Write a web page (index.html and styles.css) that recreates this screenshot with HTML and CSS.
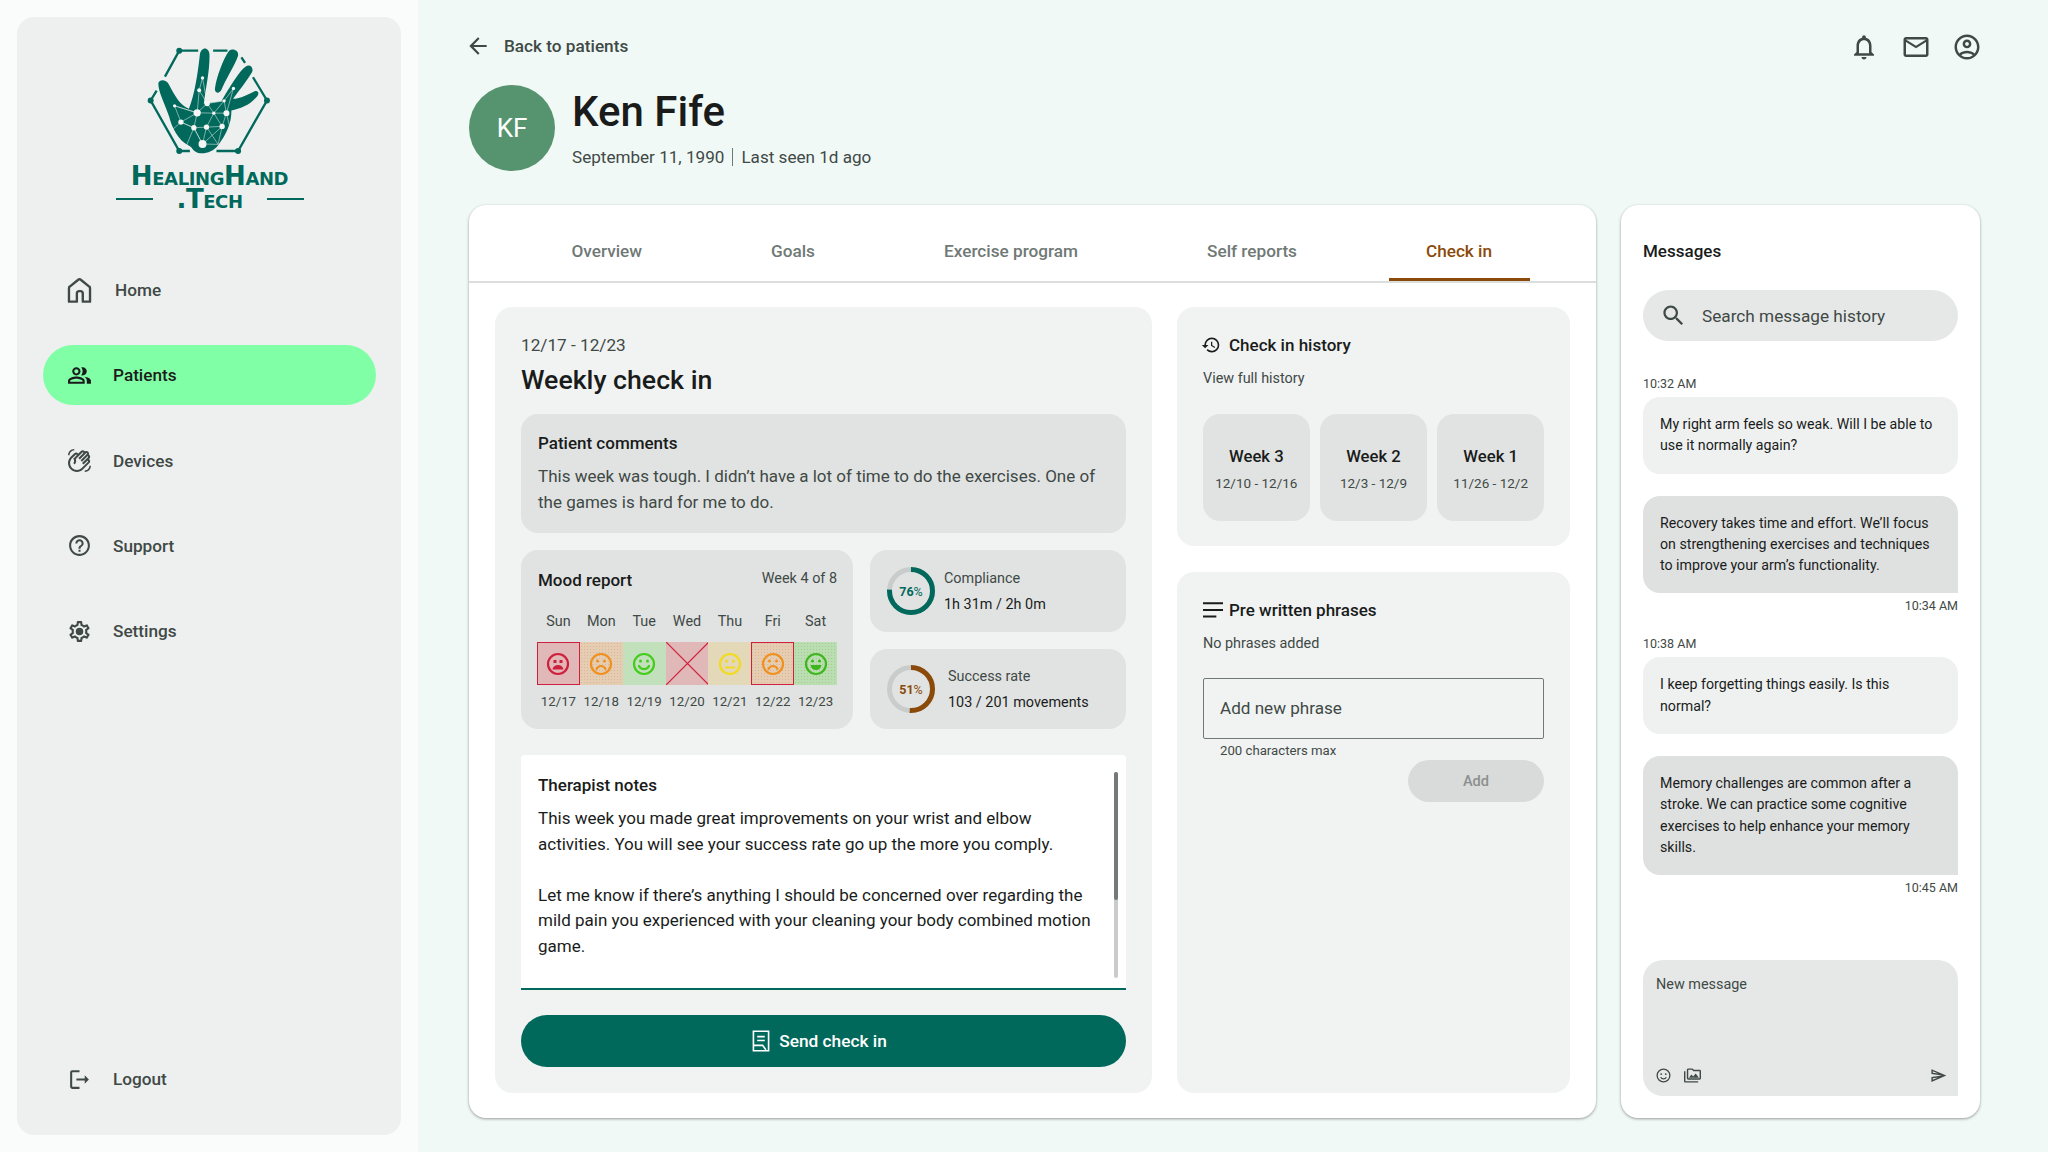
FILE: index.html
```html
<!DOCTYPE html>
<html lang="en">
<head>
<meta charset="utf-8">
<title>Ken Fife - Check in</title>
<link rel="stylesheet" href="styles.css">
</head>
<body>
<div class="app">
  <div class="side-wrap">
    <aside class="sidebar">
      <div class="logo">
        <svg class="logo-mark" viewBox="150 40 400 340" aria-hidden="true">
          <g class="hex">
            <path d="M225 138 268 60H325M370 60H413M455 80 466 97M490 140 532 210 445 362H380M300 362H268L182 210 200 180"/>
            <circle cx="268" cy="60" r="9"/><circle cx="182" cy="210" r="9"/><circle cx="532" cy="210" r="9"/><circle cx="445" cy="362" r="9"/><circle cx="268" cy="362" r="9"/>
          </g>
          <g class="hand">
            <path d="M205 158C208 145 228 146 236 160 255 195 268 222 297 235 315 190 325 120 330 72 333 47 358 47 359 72 360 120 348 170 342 220L395 212C420 170 450 120 468 108 482 98 495 115 485 128 465 160 440 190 430 205 450 205 480 190 495 182 507 178 510 190 500 200 480 225 450 235 425 240 425 280 410 310 385 345 370 365 345 372 325 368 305 360 310 352 295 345 265 330 245 290 238 260 225 220 205 185 205 158Z"/>
            <path d="M418 60C428 52 448 58 445 75 435 105 405 150 395 178 388 192 372 188 376 170 380 140 400 85 418 60Z"/>
          </g>
          <g class="net">
            <path d="M338 142 328 179 322 247M338 142 352 219 403 211 431 174 410 248 403 211M328 179 352 219 322 247 254 226 273 275 322 247 312 292 273 275 245 300M254 226 322 247M352 219 372 248 322 247M372 248 410 248 397 288 350 290 372 248 397 288M403 211 372 248M312 292 350 290 338 341 312 292 290 345M273 275 312 292 338 341 385 342 397 288 338 341M350 290 385 342M410 248 420 290"/>
            <circle cx="338" cy="142" r="5"/><circle cx="328" cy="179" r="6"/><circle cx="352" cy="219" r="8"/><circle cx="403" cy="211" r="5"/><circle cx="431" cy="174" r="5"/><circle cx="254" cy="226" r="5"/><circle cx="322" cy="247" r="11"/><circle cx="372" cy="248" r="5"/><circle cx="410" cy="248" r="9"/><circle cx="273" cy="275" r="8"/><circle cx="312" cy="292" r="8"/><circle cx="350" cy="290" r="8"/><circle cx="397" cy="288" r="8"/><circle cx="338" cy="341" r="12"/>
          </g>
        </svg>
        <div class="logo-name">HealingHand</div>
        <div class="logo-tld"><span class="logo-rule"></span><span class="logo-tech">.Tech</span><span class="logo-rule"></span></div>
      </div>
      <nav class="nav">
        <a class="nav-item">
          <svg class="icon icon-nav" viewBox="2.500 2.500 19 19"><path class="line" d="M4 20.500V10.200c0-.5.2-.9.6-1.200l6.200-5c.7-.6 1.700-.6 2.400 0l6.200 5c.4.3.6.7.6 1.200v10.300h-5.500v-6.200c0-1-.8-1.800-1.800-1.800h-.9c-1 0-1.800.8-1.800 1.800v6.200z"/></svg>
          <span class="nav-label nav-label-home">Home</span>
        </a>
        <a class="nav-item is-active">
          <svg class="icon icon-nav" viewBox="0 0 24 24"><path d="M16.67 13.13C18.04 14.06 19 15.32 19 17v3h4v-3c0-2.18-3.57-3.47-6.33-3.87zM15 12c2.21 0 4-1.79 4-4s-1.79-4-4-4c-.47 0-.91.1-1.33.24C14.5 5.27 15 6.58 15 8s-.5 2.73-1.33 3.76c.42.14.86.24 1.33.24zM9 12c2.21 0 4-1.79 4-4s-1.79-4-4-4-4 1.79-4 4 1.79 4 4 4zm0-6c1.1 0 2 .9 2 2s-.9 2-2 2-2-.9-2-2 .9-2 2-2zM9 13c-2.67 0-8 1.34-8 4v3h16v-3c0-2.66-5.33-4-8-4zm6 5H3v-.99C3.2 16.29 6.3 15 9 15s5.8 1.29 6 2z"/></svg>
          <span class="nav-label">Patients</span>
        </a>
        <a class="nav-item">
          <svg class="icon icon-nav" viewBox="0 0 24 24"><path d="M7.03 4.95 3.49 8.49c-3.32 3.32-3.32 8.7 0 12.02s8.7 3.32 12.02 0l6.01-6.01c.97-.97.97-2.56 0-3.54-.12-.12-.25-.23-.39-.32l.39-.39c.97-.97.97-2.56 0-3.54-.16-.16-.35-.3-.54-.41.38-.92.21-2.02-.54-2.77-.87-.87-2.22-.96-3.2-.28-.1-.15-.21-.29-.34-.42-.98-.97-2.56-.97-3.54 0l-2.51 2.51c-.12-.14-.24-.27-.36-.4-.98-.97-2.56-.97-3.54 0zm1.41 1.42c.2-.2.51-.2.71 0s.2.51 0 .71l-3.18 3.18c1.17 1.17 1.17 3.07 0 4.24l1.41 1.41c1.45-1.45 1.82-3.57 1.12-5.36l6.3-6.3c.2-.2.51-.2.71 0s.2.51 0 .71l-4.6 4.6 1.41 1.41 6.01-6.01c.2-.2.51-.2.71 0s.2.51 0 .71l-6.01 6.01 1.41 1.41 4.95-4.95c.2-.2.51-.2.71 0s.2.51 0 .71l-5.66 5.66 1.41 1.41 3.54-3.54c.2-.2.51-.2.71 0s.2.51 0 .71l-6 6.01c-2.54 2.54-6.65 2.54-9.19 0s-2.54-6.65 0-9.19l3.54-3.53zM23 17c0 3.31-2.69 6-6 6v-1.5c2.48 0 4.5-2.02 4.5-4.5H23zM1 7c0-3.31 2.69-6 6-6v1.5C4.52 2.5 2.5 4.52 2.5 7H1z"/></svg>
          <span class="nav-label">Devices</span>
        </a>
        <a class="nav-item">
          <svg class="icon icon-nav" viewBox="0 0 24 24"><path d="M11 18h2v-2h-2v2zm1-16C6.48 2 2 6.48 2 12s4.48 10 10 10 10-4.48 10-10S17.52 2 12 2zm0 18c-4.41 0-8-3.59-8-8s3.59-8 8-8 8 3.59 8 8-3.59 8-8 8zm0-14c-2.21 0-4 1.79-4 4h2c0-1.1.9-2 2-2s2 .9 2 2c0 2-3 1.75-3 5h2c0-2.25 3-2.5 3-5 0-2.21-1.79-4-4-4z"/></svg>
          <span class="nav-label">Support</span>
        </a>
        <a class="nav-item">
          <svg class="icon icon-nav" viewBox="0 0 24 24"><path d="M19.43 12.98c.04-.32.07-.64.07-.98 0-.34-.03-.66-.07-.98l2.11-1.65c.19-.15.24-.42.12-.64l-2-3.46c-.09-.16-.26-.25-.44-.25-.06 0-.12.01-.17.03l-2.49 1c-.52-.4-1.08-.73-1.69-.98l-.38-2.65C14.46 2.18 14.25 2 14 2h-4c-.25 0-.46.18-.49.42l-.38 2.65c-.61.25-1.17.59-1.69.98l-2.49-1c-.06-.02-.12-.03-.18-.03-.17 0-.34.09-.43.25l-2 3.46c-.13.22-.07.49.12.64l2.11 1.65c-.04.32-.07.65-.07.98 0 .33.03.66.07.98l-2.11 1.65c-.19.15-.24.42-.12.64l2 3.46c.09.16.26.25.44.25.06 0 .12-.01.17-.03l2.49-1c.52.4 1.08.73 1.69.98l.38 2.65c.03.24.24.42.49.42h4c.25 0 .46-.18.49-.42l.38-2.65c.61-.25 1.17-.59 1.69-.98l2.49 1c.06.02.12.03.18.03.17 0 .34-.09.43-.25l2-3.46c.12-.22.07-.49-.12-.64l-2.11-1.65zm-1.98-1.71c.04.31.05.52.05.73 0 .21-.02.43-.05.73l-.14 1.13.89.7 1.08.84-.7 1.21-1.27-.51-1.04-.42-.9.68c-.43.32-.84.56-1.25.73l-1.06.43-.16 1.13-.2 1.35h-1.4l-.19-1.35-.16-1.13-1.06-.43c-.43-.18-.83-.41-1.23-.71l-.91-.7-1.06.43-1.27.51-.7-1.21 1.08-.84.89-.7-.14-1.13c-.03-.31-.05-.54-.05-.74s.02-.43.05-.73l.14-1.13-.89-.7-1.08-.84.7-1.21 1.27.51 1.04.42.9-.68c.43-.32.84-.56 1.25-.73l1.06-.43.16-1.13.2-1.35h1.39l.19 1.35.16 1.13 1.06.43c.43.18.83.41 1.23.71l.91.7 1.06-.43 1.27-.51.7 1.21-1.07.85-.89.7.14 1.13z"/><circle cx="12" cy="12" r="3.600"/></svg>
          <span class="nav-label">Settings</span>
        </a>
      </nav>
      <a class="nav-item nav-logout">
        <svg class="icon icon-nav" viewBox="0 0 24 24"><path d="M5 5h7V3H5a2 2 0 0 0-2 2v14a2 2 0 0 0 2 2h7v-2H5V5zm16 7-4-4v3H9v2h8v3l4-4z"/></svg>
        <span class="nav-label">Logout</span>
      </a>
    </aside>
  </div>

  <main class="main">
    <div class="topbar">
      <a class="back">
        <svg class="icon icon-back" viewBox="0 0 24 24"><path d="M20 11H7.830l5.590-5.590L12 4l-8 8 8 8 1.410-1.410L7.830 13H20v-2z"/></svg>
        <span>Back to patients</span>
      </a>
      <div class="top-icons">
        <svg class="icon icon-top" viewBox="0 0 24 24"><path d="M12 22c1.100 0 2-.9 2-2h-4c0 1.100.9 2 2 2zm6-6v-5c0-3.070-1.630-5.640-4.500-6.320V4c0-.83-.67-1.500-1.500-1.500s-1.500.67-1.500 1.500v.68C7.640 5.360 6 7.920 6 11v5l-2 2v1h16v-1l-2-2zm-2 1H8v-6c0-2.480 1.510-4.500 4-4.500s4 2.020 4 4.500v6z"/></svg>
        <svg class="icon icon-top" viewBox="0 0 24 24"><path d="M22 6c0-1.100-.9-2-2-2H4c-1.100 0-2 .9-2 2v12c0 1.100.9 2 2 2h16c1.100 0 2-.9 2-2V6zm-2 0-8 5-8-5h16zm0 12H4V8l8 5 8-5v10z"/></svg>
        <svg class="icon icon-top" viewBox="0 0 24 24"><path d="M12 2C6.480 2 2 6.480 2 12s4.480 10 10 10 10-4.480 10-10S17.520 2 12 2zM7.350 18.500C8.660 17.560 10.260 17 12 17s3.340.56 4.650 1.500c-1.310.94-2.910 1.500-4.650 1.500s-3.340-.56-4.650-1.500zm10.790-1.380C16.450 15.800 14.320 15 12 15s-4.450.8-6.140 2.120C4.700 15.730 4 13.950 4 12c0-4.420 3.580-8 8-8s8 3.580 8 8c0 1.950-.7 3.730-1.860 5.120zM12 6c-1.930 0-3.500 1.570-3.500 3.500S10.070 13 12 13s3.500-1.570 3.500-3.500S13.930 6 12 6zm0 5c-.83 0-1.500-.67-1.500-1.500S11.170 8 12 8s1.500.67 1.500 1.500S12.830 11 12 11z"/></svg>
      </div>
    </div>

    <header class="patient">
      <div class="avatar">KF</div>
      <div class="patient-info">
        <h1 class="patient-name">Ken Fife</h1>
        <p class="patient-meta"><span>September 11, 1990</span><span class="meta-sep"></span><span>Last seen 1d ago</span></p>
      </div>
    </header>

    <div class="content">
      <section class="card card-main">
        <div class="tabs">
          <a class="tab">Overview</a>
          <a class="tab">Goals</a>
          <a class="tab">Exercise program</a>
          <a class="tab">Self reports</a>
          <a class="tab is-active">Check in</a>
        </div>
        <div class="panels">
          <div class="panel panel-checkin">
            <div class="week-range">12/17 - 12/23</div>
            <h2 class="checkin-title">Weekly check in</h2>
            <div class="comments">
              <h3 class="block-title">Patient comments</h3>
              <p class="block-text">This week was tough. I didn’t have a lot of time to do the exercises. One of the games is hard for me to do.</p>
            </div>
            <div class="stats-row">
              <div class="mood">
                <div class="mood-head">
                  <h3 class="block-title">Mood report</h3>
                  <span class="mood-week">Week 4 of 8</span>
                </div>
                <div class="mood-grid">
                  <span class="mood-day">Sun</span><span class="mood-day">Mon</span><span class="mood-day">Tue</span><span class="mood-day">Wed</span><span class="mood-day">Thu</span><span class="mood-day">Fri</span><span class="mood-day">Sat</span>
                  <div class="mood-cell bg-red is-flagged">
                    <svg class="face face-red" viewBox="0 0 24 24"><circle cx="12" cy="12" r="10"/><path class="fill" d="M7.500 8h3v3h-3zM13.500 8h3v3h-3zM6.500 17.500c.5-3 2.500-4.500 5.500-4.500s5 1.500 5.500 4.500z"/></svg>
                  </div>
                  <div class="mood-cell bg-orange dots">
                    <svg class="face face-orange" viewBox="0 0 24 24"><circle cx="12" cy="12" r="10"/><circle class="fill" cx="8.500" cy="9" r="1.500"/><circle class="fill" cx="15.500" cy="9" r="1.500"/><path d="M7.500 17c1-2 2.500-3 4.500-3s3.500 1 4.500 3"/></svg>
                  </div>
                  <div class="mood-cell bg-green">
                    <svg class="face face-green" viewBox="0 0 24 24"><circle cx="12" cy="12" r="10"/><circle class="fill" cx="8.500" cy="9" r="1.500"/><circle class="fill" cx="15.500" cy="9" r="1.500"/><path d="M7 14c1 2 2.800 3.200 5 3.200s4-1.200 5-3.200"/></svg>
                  </div>
                  <div class="mood-cell bg-red">
                    <svg class="cross" viewBox="0 0 42 42" preserveAspectRatio="none"><path d="M0 0 42 42M42 0 0 42"/></svg>
                  </div>
                  <div class="mood-cell bg-yellow">
                    <svg class="face face-yellow" viewBox="0 0 24 24"><circle cx="12" cy="12" r="10"/><circle class="fill" cx="8.500" cy="9" r="1.500"/><circle class="fill" cx="15.500" cy="9" r="1.500"/><path d="M8 15.500h8"/></svg>
                  </div>
                  <div class="mood-cell bg-orange dots is-flagged">
                    <svg class="face face-orange" viewBox="0 0 24 24"><circle cx="12" cy="12" r="10"/><circle class="fill" cx="8.500" cy="9" r="1.500"/><circle class="fill" cx="15.500" cy="9" r="1.500"/><path d="M7.500 17c1-2 2.500-3 4.500-3s3.500 1 4.500 3"/></svg>
                  </div>
                  <div class="mood-cell bg-lime dots">
                    <svg class="face face-lime" viewBox="0 0 24 24"><circle cx="12" cy="12" r="10"/><circle class="fill" cx="8.500" cy="9" r="1.500"/><circle class="fill" cx="15.500" cy="9" r="1.500"/><path class="fill" d="M6.500 13h11c-.3 3-2.500 5-5.500 5s-5.200-2-5.500-5z"/></svg>
                  </div>
                  <span class="mood-date">12/17</span><span class="mood-date">12/18</span><span class="mood-date">12/19</span><span class="mood-date">12/20</span><span class="mood-date">12/21</span><span class="mood-date">12/22</span><span class="mood-date">12/23</span>
                </div>
              </div>
              <div class="stat-col">
                <div class="stat stat-compliance">
                  <div class="ring ring-teal">
                    <svg viewBox="0 0 48 48"><circle class="ring-track" cx="24" cy="24" r="21.500"/><circle class="ring-bar" cx="24" cy="24" r="21.500" pathLength="100" stroke-dasharray="76 24"/></svg>
                    <span class="ring-value">76<i>%</i></span>
                  </div>
                  <div class="stat-text">
                    <span class="stat-label">Compliance</span>
                    <span class="stat-value">1h 31m / 2h 0m</span>
                  </div>
                </div>
                <div class="stat stat-success">
                  <div class="ring ring-brown">
                    <svg viewBox="0 0 48 48"><circle class="ring-track" cx="24" cy="24" r="21.500"/><circle class="ring-bar" cx="24" cy="24" r="21.500" pathLength="100" stroke-dasharray="51 49"/></svg>
                    <span class="ring-value">51<i>%</i></span>
                  </div>
                  <div class="stat-text">
                    <span class="stat-label">Success rate</span>
                    <span class="stat-value">103 / 201 movements</span>
                  </div>
                </div>
              </div>
            </div>
            <div class="notes">
              <h3 class="block-title">Therapist notes</h3>
              <p class="notes-text">This week you made great improvements on your wrist and elbow activities. You will see your success rate go up the more you comply.</p>
              <p class="notes-text">Let me know if there’s anything I should be concerned over regarding the mild pain you experienced with your cleaning your body combined motion game.</p>
              <div class="scroll-track"><div class="scroll-thumb"></div></div>
            </div>
            <button class="send-btn" type="button">
              <svg class="icon-doc" viewBox="0 0 24 24"><path d="M5 3h14v18H5zM8.500 8h7M8.500 11.500h7M5 16h8.500l3 4"/></svg>
              <span>Send check in</span>
            </button>
          </div>

          <div class="panel-stack">
            <div class="panel panel-history">
              <h3 class="side-title">
                <svg class="icon icon-title icon-history" viewBox="0 0 24 24"><path d="M13 3a9 9 0 0 0-9 9H1l3.890 3.890.070.140L9 12H6c0-3.870 3.130-7 7-7s7 3.130 7 7-3.130 7-7 7c-1.930 0-3.680-.790-4.940-2.060l-1.420 1.420A8.954 8.954 0 0 0 13 21a9 9 0 0 0 0-18zm-1 5v5l4.280 2.540.720-1.210-3.500-2.080V8H12z"/></svg>
                <span>Check in history</span>
              </h3>
              <a class="side-sub">View full history</a>
              <div class="weeks">
                <div class="week"><strong>Week 3</strong><span>12/10 - 12/16</span></div>
                <div class="week"><strong>Week 2</strong><span>12/3 - 12/9</span></div>
                <div class="week"><strong>Week 1</strong><span>11/26 - 12/2</span></div>
              </div>
            </div>
            <div class="panel panel-phrases">
              <h3 class="side-title">
                <svg class="icon icon-title" viewBox="3 3 18 18"><path d="M3 5h18v1.800H3zM3 11h18v1.800H3zM3 17h12v1.800H3z"/></svg>
                <span>Pre written phrases</span>
              </h3>
              <p class="side-sub">No phrases added</p>
              <div class="phrase-input">Add new phrase</div>
              <p class="phrase-hint">200 characters max</p>
              <button class="add-btn" type="button">Add</button>
            </div>
          </div>
        </div>
      </section>

      <section class="card card-messages">
        <h2 class="msg-title">Messages</h2>
        <div class="search">
          <svg class="icon icon-search" viewBox="0 0 24 24"><path d="M15.500 14h-.790l-.280-.270C15.410 12.590 16 11.110 16 9.500 16 5.910 13.090 3 9.500 3S3 5.910 3 9.500 5.910 16 9.500 16c1.610 0 3.090-.590 4.230-1.570l.270.280v.790l5 4.990L20.490 19l-4.990-5zm-6 0C7.010 14 5 11.990 5 9.500S7.010 5 9.500 5 14 7.010 14 9.500 11.990 14 9.500 14z"/></svg>
          <span>Search message history</span>
        </div>
        <div class="thread">
          <div class="msg-group">
            <time class="msg-time">10:32 AM</time>
            <div class="bubble">My right arm feels so weak. Will I be able to use it normally again?</div>
          </div>
          <div class="msg-group">
            <div class="bubble bubble-own">Recovery takes time and effort. We’ll focus on strengthening exercises and techniques to improve your arm’s functionality.</div>
            <time class="msg-time time-own">10:34 AM</time>
          </div>
          <div class="msg-group msg-group-new">
            <time class="msg-time">10:38 AM</time>
            <div class="bubble">I keep forgetting things easily. Is this normal?</div>
          </div>
          <div class="msg-group">
            <div class="bubble bubble-own">Memory challenges are common after a stroke. We can practice some cognitive exercises to help enhance your memory skills.</div>
            <time class="msg-time time-own">10:45 AM</time>
          </div>
        </div>
        <div class="composer">
          <span class="composer-text">New message</span>
          <div class="composer-tools">
            <svg class="icon icon-tool" viewBox="0 0 24 24"><circle class="ring-line" cx="12" cy="12" r="9"/><circle cx="8.800" cy="10" r="1.300"/><circle cx="15.200" cy="10" r="1.300"/><path class="smile-line" d="M8 14.500c.8 1.500 2.300 2.400 4 2.400s3.200-.9 4-2.400"/></svg>
            <svg class="icon icon-tool" viewBox="0 0 24 24"><path d="M2 6H0v5h.01L0 20c0 1.100.9 2 2 2h18v-2H2V6zm20-2h-8l-2-2H6c-1.100 0-1.990.9-1.990 2L4 16c0 1.100.9 2 2 2h16c1.100 0 2-.9 2-2V6c0-1.100-.9-2-2-2zm0 12H6V4h5.170l1.410 1.410.590.590H22v10zM7 15h14l-4.500-6-3.500 4.510-2.500-3.010z"/></svg>
            <svg class="icon icon-tool tool-send" viewBox="0 0 24 24"><path d="M4.010 6.030l7.510 3.220-7.520-1 .01-2.220m7.500 8.720L4 17.970v-2.220l7.510-1M2.010 3L2 10l15 2-15 2 .01 7L23 12 2.010 3z"/></svg>
          </div>
        </div>
      </section>
    </div>
  </main>
</div>
</body>
</html>
```

FILE: styles.css
```css
* { box-sizing: border-box; }
html, body { margin: 0; padding: 0; }
body {
  font-family: Roboto, "Liberation Sans", sans-serif;
  color: #191c1b;
  background: #f1f9f6;
}
h1, h2, h3, p { margin: 0; font-weight: 400; }
.icon { display: block; fill: currentColor; flex: none; }
.line { fill: none; stroke: currentColor; stroke-width: 1.800; stroke-linejoin: round; }

.app { display: flex; width: 2048px; height: 1152px; overflow: hidden; }

/* Sidebar */
.side-wrap { width: 418px; flex: none; padding: 17px; background: #fafcfb; }
.sidebar {
  height: 1118px;
  background: #eef0ef;
  border-radius: 17px;
  padding: 30px 25px 0 26px;
  display: flex;
  flex-direction: column;
}
.logo { height: 185px; display: flex; flex-direction: column; align-items: center; color: #00695c; }
.logo-mark { width: 133px; height: 113px; display: block; margin: -3px 0 0 -6px; overflow: visible; }
.hex path { fill: none; stroke: #00695c; stroke-width: 7; }
.hex circle, .hand path { fill: #00695c; }
.net path { fill: none; stroke: #e8eeec; stroke-width: 1.600; }
.net circle { fill: #f4f6f5; }
.logo-name {
  margin-top: 8px;
  font: 700 26px/22px "DejaVu Sans", sans-serif;
  font-variant: small-caps;
  letter-spacing: -.4px;
  white-space: nowrap;
}
.logo-tld { display: flex; align-items: center; width: 188px; justify-content: space-between; margin-top: 1px; }
.logo-tech { font: 700 26px/22px "DejaVu Sans", sans-serif; font-variant: small-caps; letter-spacing: -.4px; }
.logo-rule { width: 37px; height: 2px; background: #00695c; }

.nav { display: flex; flex-direction: column; gap: 25.300px; margin-top: 28px; }
.nav-item {
  height: 60px;
  border-radius: 30px;
  display: flex;
  align-items: center;
  gap: 21.500px;
  padding-left: 23.500px;
  color: #3f4946;
  font-size: 17.200px;
  font-weight: 500;
}
.nav-item.is-active { background: #80ffa6; color: #191c1b; }
.nav-label-home { margin-left: 2px; }
.nav-logout { margin-top: auto; margin-bottom: 26px; }
.icon-nav { width: 25px; height: 25px; }

/* Main */
.main { flex: 1; min-width: 0; padding: 27px 68px 34px 51px; display: flex; flex-direction: column; }
.topbar { height: 38px; display: flex; align-items: center; justify-content: space-between; flex: none; }
.back { display: flex; align-items: center; gap: 13px; color: #3f4946; font-size: 17.200px; font-weight: 500; }
.icon-back { width: 26px; height: 26px; margin-left: -4px; }
.top-icons { display: flex; gap: 21.500px; color: #3f4946; margin: 2px -2px 0 0; }
.icon-top { width: 30px; height: 30px; }

.patient { display: flex; align-items: center; gap: 17px; margin-top: 20px; height: 86px; flex: none; }
.avatar {
  width: 86px; height: 86px; border-radius: 50%;
  background: #56946f; color: #fff;
  display: flex; align-items: center; justify-content: center;
  font-size: 26px; font-weight: 400; flex: none;
}
.patient-name { font-size: 42px; line-height: 52px; font-weight: 500; margin-top: -1px; }
.patient-meta { display: flex; align-items: center; font-size: 17.100px; line-height: 24px; color: #3f4946; margin-top: 7px; }
.meta-sep { width: 1px; height: 18px; background: #6f7976; margin: 0 8px; }

.content { display: flex; gap: 25px; margin-top: 34px; flex: 1; min-height: 0; }
.card { background: #fff; border-radius: 17px; box-shadow: 0 1px 3px rgba(0,0,0,.38); }
.card-main { width: 1127px; display: flex; flex-direction: column; flex: none; }

.tabs { height: 78px; border-bottom: 2px solid #dcdedd; display: flex; gap: 54px; padding-left: 65px; flex: none; }
.tab {
  padding-top: 18px;
  display: flex; align-items: center; justify-content: center;
  color: #6f7976;
  font-size: 17.200px; font-weight: 500;
  border-bottom: 3px solid transparent;
}
.tab:nth-child(1) { width: 145.500px; }
.tab:nth-child(2) { width: 119px; }
.tab:nth-child(3) { width: 209px; }
.tab:nth-child(4) { width: 165px; }
.tab:nth-child(5) { width: 141px; }
.tab.is-active { color: #8b4a0a; border-bottom-color: #8b4a0a; }

.panels { flex: 1; min-height: 0; padding: 24px 26px 26px; display: grid; grid-template-columns: 657px 393px; gap: 25px; }
.panel { background: #f1f3f2; border-radius: 17px; }
.panel-stack { display: flex; flex-direction: column; gap: 26px; }

.panel-checkin { padding: 26px; display: flex; flex-direction: column; }
.week-range { font-size: 17.200px; line-height: 24px; color: #3f4946; }
.checkin-title { font-size: 26.700px; line-height: 36px; font-weight: 500; margin-top: 5px; }
.comments { background: #e1e3e2; border-radius: 17px; padding: 17px; height: 119px; margin-top: 16px; flex: none; }
.block-title { font-size: 17px; line-height: 24px; font-weight: 500; }
.block-text { font-size: 17px; line-height: 25.500px; color: #3f4946; margin-top: 9px; }

.stats-row { display: grid; grid-template-columns: 332px 256px; gap: 17px; margin-top: 17px; flex: none; }
.mood { background: #e1e3e2; border-radius: 17px; padding: 18px 16px 0 17px; height: 179px; }
.mood-head { display: flex; justify-content: space-between; align-items: flex-start; height: 24px; }
.mood-week { font-size: 14.400px; line-height: 22px; color: #3f4946; }
.mood-grid { display: grid; grid-template-columns: repeat(7, 1fr); grid-template-rows: 36px 43px 33px; margin-top: 14px; margin-left: -1px; align-items: center; justify-items: center; }
.mood-day { font-size: 14.400px; line-height: 20px; color: #3f4946; align-self: start; padding-top: 6px; }
.mood-date { font-size: 13.300px; line-height: 20px; color: #3f4946; }
.mood-cell { width: 100%; height: 43px; display: flex; align-items: center; justify-content: center; position: relative; align-self: stretch; }
.bg-red { background: #e0b8b8; }
.bg-orange { background: #e6cdb2; }
.bg-green { background: #c3e0bd; }
.bg-yellow { background: #e3d8b8; }
.bg-lime { background: #b9deb0; }
.dots { background-image: radial-gradient(rgba(150,110,90,.22) .7px, transparent .8px); background-size: 3px 3px; }
.is-flagged { outline: 1.500px solid #cf1f3c; outline-offset: -1.500px; }
.face { width: 24px; height: 24px; fill: none; stroke-width: 2.200; stroke-linecap: round; }
.face .fill { stroke: none; }
.face-red { stroke: #cf1f3c; } .face-red .fill { fill: #cf1f3c; }
.face-orange { stroke: #f0901e; } .face-orange .fill { fill: #f0901e; }
.face-green { stroke: #44cc1c; } .face-green .fill { fill: #44cc1c; }
.face-yellow { stroke: #f3da1c; } .face-yellow .fill { fill: #f3da1c; }
.face-lime { stroke: #3fb61f; } .face-lime .fill { fill: #3fb61f; }
.cross { position: absolute; inset: 0; width: 100%; height: 100%; fill: none; stroke: #cf1f3c; stroke-width: 1.200; }

.stat-col { display: flex; flex-direction: column; gap: 17px; }
.stat { background: #e1e3e2; border-radius: 17px; padding-left: 17px; display: flex; align-items: center; }
.stat-compliance { height: 82px; gap: 9px; }
.stat-success { height: 80px; gap: 13px; }
.ring { width: 48px; height: 48px; position: relative; flex: none; }
.ring svg { display: block; width: 100%; height: 100%; transform: rotate(-90deg); fill: none; stroke-width: 5; }
.ring-track { stroke: #c8cdcc; }
.ring-teal { color: #00695c; }
.ring-brown { color: #8b4a0a; }
.ring-bar { stroke: currentColor; }
.ring-value { position: absolute; inset: 0; display: flex; align-items: center; justify-content: center; font-size: 12.500px; font-weight: 700; }
.ring-value i { font-style: normal; font-weight: 400; }
.stat-text { display: flex; flex-direction: column; gap: 5px; }
.stat-label { font-size: 14.400px; line-height: 21px; color: #3f4946; }
.stat-value { font-size: 14.400px; line-height: 21px; color: #191c1b; }

.notes {
  background: #fff;
  margin-top: 26px;
  height: 235px;
  padding: 18px 30px 0 17px;
  border-bottom: 2px solid #00695c;
  position: relative;
  flex: none;
  border-radius: 4px 4px 0 0;
}
.notes-text { font-size: 17px; line-height: 25.500px; color: #191c1b; }
.notes .block-title + .notes-text { margin-top: 9px; }
.notes-text + .notes-text { margin-top: 25.500px; }
.scroll-track { position: absolute; top: 17px; right: 8px; width: 4px; height: 206px; border-radius: 2px; background: #c9cccb; }
.scroll-thumb { height: 128px; border-radius: 2px; background: #747a78; }

.send-btn {
  margin-top: 25px; height: 52px; border: 0; border-radius: 26px;
  background: #00695c; color: #fff;
  display: flex; align-items: center; justify-content: center; gap: 5px;
  padding: 0 12px 0 0;
  font-family: inherit; font-size: 17.300px; font-weight: 500;
  flex: none;
}
.icon-doc { width: 26px; height: 26px; fill: none; stroke: #fff; stroke-width: 1.500; }

.panel-history { height: 239px; padding: 26px 26px 25px; flex: none; }
.panel-phrases { flex: 1; padding: 26px 26px 25px; display: flex; flex-direction: column; }
.side-title { display: flex; align-items: center; gap: 6px; font-size: 17px; line-height: 24px; font-weight: 500; }
.icon-title { width: 20px; height: 20px; }
.icon-history { margin-left: -2px; margin-right: 2px; }
.side-sub { display: block; font-size: 14.400px; line-height: 22px; color: #3f4946; margin-top: 11px; }
.weeks { display: grid; grid-template-columns: repeat(3, 1fr); gap: 10.500px; margin-top: 24px; }
.week { height: 107px; padding-top: 3px; background: #e1e3e2; border-radius: 17px; display: flex; flex-direction: column; align-items: center; justify-content: center; gap: 4px; }
.week strong { font-size: 16.700px; line-height: 24px; font-weight: 500; }
.week span { font-size: 13.500px; line-height: 20px; color: #3f4946; }

.phrase-input {
  margin-top: 23px; height: 61px; border: 1px solid #6f7976; border-radius: 2px;
  padding: 0 0 2px 16px; display: flex; align-items: center;
  font-size: 17.100px; color: #3f4946; background: transparent;
}
.phrase-hint { font-size: 13.200px; line-height: 18px; color: #3f4946; padding-left: 17px; margin-top: 3px; }
.add-btn {
  align-self: flex-end; width: 136px; height: 42px; margin-top: 0;
  border: 0; border-radius: 21px; background: #d9dbda; color: #8b908e;
  font-family: inherit; font-size: 14.600px; font-weight: 500;
}

/* Messages */
.card-messages { flex: 1; padding: 34px 22px 22px; display: flex; flex-direction: column; }
.msg-title { font-size: 17px; line-height: 24px; font-weight: 500; }
.search {
  margin-top: 27px; height: 51px; border-radius: 26px; background: #e6e8e7;
  display: flex; align-items: center; gap: 15px; padding-left: 17px;
  font-size: 17.200px; color: #3f4946; flex: none;
}
.icon-search { width: 27px; height: 27px; }
.thread { margin-top: 33px; display: flex; flex-direction: column; gap: 22px; }
.msg-group { display: flex; flex-direction: column; }
.msg-group-new { margin-top: -4px; }
.msg-time { font-size: 12.500px; line-height: 20px; color: #3f4946; }
.time-own { text-align: right; margin-top: 3px; }
.bubble {
  background: #eff1f0; border-radius: 17px; padding: 17px;
  font-size: 14.200px; line-height: 21.300px; color: #191c1b;
}
.msg-group > .msg-time:first-child + .bubble { margin-top: 3px; }
.bubble-own { background: #dfe1e0; border-radius: 17px 17px 0 17px; }
.composer {
  margin-top: auto; height: 136px; background: #e6e8e7; border-radius: 20px 20px 0 20px;
  padding: 14px 13px 0; display: flex; flex-direction: column;
}
.composer-text { font-size: 14.400px; line-height: 22px; color: #3f4946; }
.composer-tools { margin-top: auto; margin-bottom: 12px; display: flex; align-items: center; gap: 12px; color: #3f4946; margin-left: -1px; }
.icon-tool { width: 17px; height: 17px; }
.tool-send { margin-left: auto; margin-right: -2px; }
.ring-line, .smile-line { fill: none; stroke: currentColor; stroke-width: 1.800; }
```
